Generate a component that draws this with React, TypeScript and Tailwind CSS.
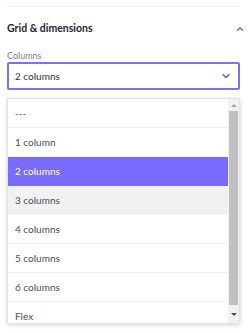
import { ChevronDown, ChevronUp } from 'lucide-react'

const options = ['---', '1 column', '2 columns', '3 columns', '4 columns', '5 columns', '6 columns', 'Flex']

export default function App() {
  const selected = '2 columns'
  const hovered  = '3 columns'

  return (
    <div className="w-[250px] h-[333px] bg-white px-[7px] pt-[6px] overflow-hidden" style={{ fontFamily: 'Lato, "Noto Sans", sans-serif' }}>
      <div className="border-t border-[#ececec] mr-[3px]" />

      <div className="flex items-center justify-between h-[28px] mt-[8px]">
        <span className="text-[10.5px] font-bold text-[#1f2430]">Grid &amp; dimensions</span>
        <ChevronUp size={10} strokeWidth={3} className="text-[#6b7280] mr-[-2px]" />
      </div>

      <div className="text-[9px] text-[#7b8190] mt-[7px] leading-[12px]">Columns</div>

      <div className="h-[28px] border-2 border-[#7c6ff5] rounded-[2px] flex items-center justify-between pl-[6px] pr-[6px] w-[233px]">
        <span className="text-[10px] text-[#2f3441]">2 columns</span>
        <ChevronDown size={12} strokeWidth={3} className="text-[#6a5cf0]" />
      </div>

      <div className="mt-[8px] w-[233px] h-[226px] flex bg-white border border-[#e2e2e2] shadow-[0_1px_4px_rgba(0,0,0,0.18)] overflow-hidden">
        <div className="flex-1 flex flex-col">
          {options.map(o => (
            <div
              key={o}
              className={
                'h-[29px] shrink-0 flex items-center pl-[7px] text-[10px] border-b ' +
                (o === selected
                  ? 'bg-[#786bfd] text-white border-[#786bfd]'
                  : o === hovered
                    ? 'bg-[#f1f1f1] text-[#4a4f5c] border-[#f1f1f1]'
                    : 'bg-white text-[#4a4f5c] border-[#efefef]')
              }
            >
              {o}
            </div>
          ))}
        </div>

        <div className="w-[11px] bg-[#f1f1f1] flex flex-col items-center">
          <div className="h-[12px] flex items-center justify-center">
            <div className="w-0 h-0 border-l-[3px] border-r-[3px] border-b-[3px] border-l-transparent border-r-transparent border-b-[#a3a3a3]" />
          </div>
          <div className="w-[9px] flex-1 bg-[#c1c1c1]" />
          <div className="h-[18px] flex items-center justify-center">
            <div className="w-0 h-0 border-l-[3px] border-r-[3px] border-t-[3px] border-l-transparent border-r-transparent border-t-[#505050]" />
          </div>
        </div>
      </div>
    </div>
  )
}
